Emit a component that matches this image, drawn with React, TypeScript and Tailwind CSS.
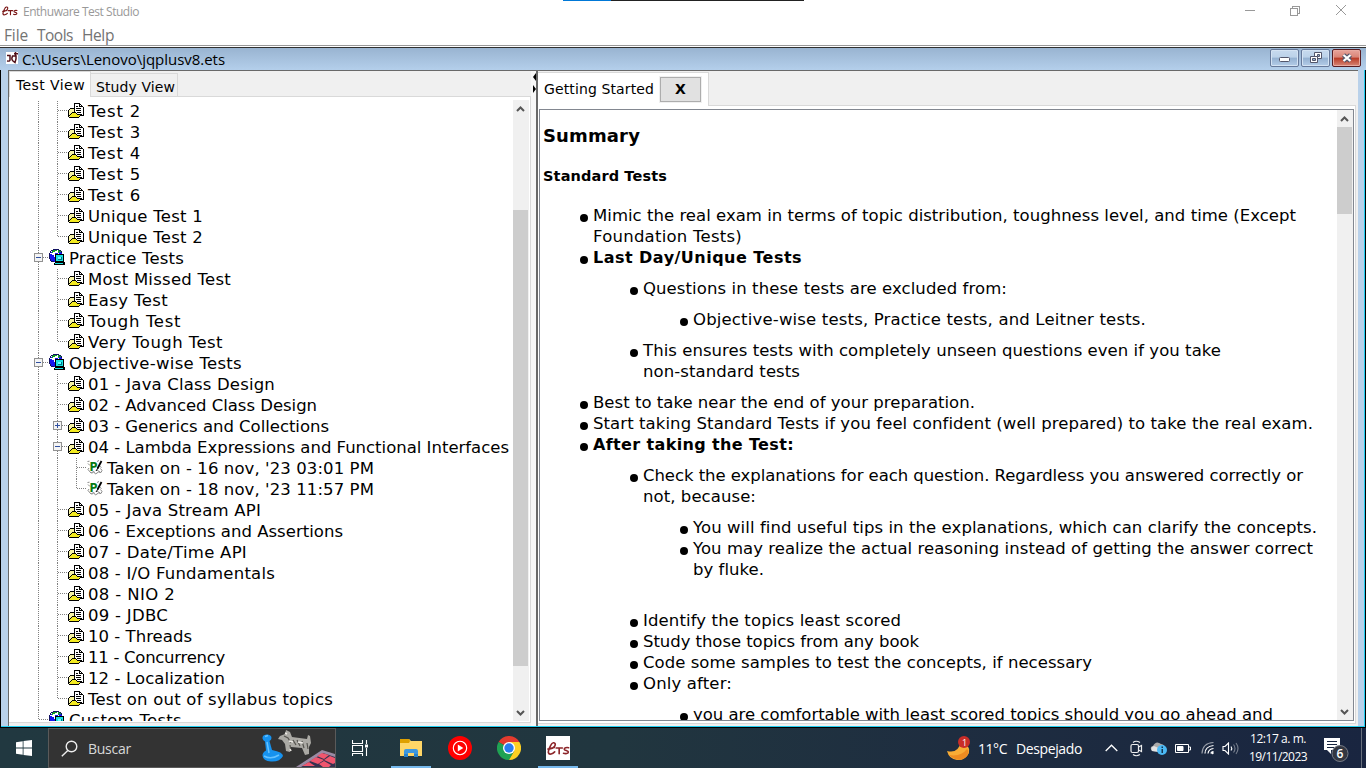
import React, { useLayoutEffect, useRef, useState } from 'react';

const VERDANA = "font-['DejaVu_Sans',sans-serif]";

/* A single line of text tracked so that it fills the given width. */
function Fit({ w, children, className = '' }: { w: number; children: string; className?: string }) {
  const ref = useRef<HTMLSpanElement>(null);
  const [tracking, setTracking] = useState(0);
  useLayoutEffect(() => {
    if (ref.current) {
      const natural = ref.current.getBoundingClientRect().width;
      setTracking((w - natural) / children.length);
    }
  }, []);
  return (
    <span ref={ref} className={'inline-block whitespace-pre ' + className} style={{ letterSpacing: tracking + 'px' }}>
      {children}
    </span>
  );
}

function EtsLogo({ width, height, color }: { width: number; height: number; color: string }) {
  return (
    <svg width={width} height={height} viewBox="0 0 24 16" fill="none" stroke={color} strokeWidth="1.7" strokeLinecap="round">
      <path d="M3 8.5C7 8 9 5 8.500 3 8 1.500 5.500 1.500 4 4.500 2.500 7 1 10 1.500 12.500 2.200 15 6 13.500 8 11.500M1 8.500 7.500 7" />
      <path d="M9.500 7.500h6.500M12.700 7.500v6M22.500 7.200c-2-.5-4.500 0-4.500 1.500s4.300 1.300 4.300 3-3 2-5 1.300" />
    </svg>
  );
}

function FolderIcon() {
  return (
    <svg className="shrink-0" width="16" height="15" viewBox="0 0 16 15" shapeRendering="crispEdges">
      <path d="M1 7h1V6h5v8H1z" fill="#f7f4a6" />
      <path d="M6 1h6v2h3v9H6z" fill="#fff" />
      <path d="M2 13v-1h1v-1h1v-1h5v1h4v1h-1v1h-1v1H2z" fill="#f3ea20" />
      <path d="M6 0h6v1H6zM6 1h1v8H6zM12 1h1v1h-1zM13 2h1v1h-1zM14 3h1v1h1v9h-3v-1h2V4h-4V1h1v2h2zM8 3h2v1H8zM8 5h5v1H8zM8 7h5v1H8zM9 9h4v1H9zM2 5h4v1H2zM1 6h1v1H1zM0 7h1v7H0zM1 12h1v1H1zM2 11h1v1H2zM3 10h1v1H3zM4 9h4v1H4zM8 10h1v1H8zM9 11h5v1H9zM12 12h1v1h-1zM11 13h1v1h-1zM1 14h10v1H1z" fill="#000" />
    </svg>
  );
}

function GlobeIcon() {
  return (
    <svg className="-mt-px shrink-0" width="16" height="16" viewBox="0 0 16 16" shapeRendering="crispEdges">
      <path d="M4 1h6v1h2v2h1v6H8v3H4v-1H2v-2H1V4h1V2h2z" fill="#fff" />
      <path d="M0 5h3v1h2v2h1v5H4v-1H2v-2H1V9H0zM2 3h2v1H2zM10 3h3v2h-3zM6 4h3v1H6z" fill="#1414f0" />
      <path d="M4 1h4v1H6v1H4v1H3V2h1zM9 1h2v1h1v1h-2v1H9z" fill="#14a024" />
      <path d="M4 0h6v1H4zM10 1h2v1h-2zM12 2h1v2h-1zM2 1h2v1H2zM1 2h1v2H1zM0 4h1v6H0zM1 10h1v2H1zM2 12h3v1H2z" fill="#101060" />
      <path d="M6 5h9v8h1v3H5v-2h1z" fill="#000" />
      <path d="M7 6h7v6H7z" fill="#18e0e0" />
      <path d="M9 8h4v3H9z" fill="#078" />
      <path d="M9 8h3v2H9z" fill="#6ff" />
      <path d="M6 14h8v1H6z" fill="#20dede" />
    </svg>
  );
}

function ResultIcon() {
  return (
    <svg className="shrink-0" width="16" height="15" viewBox="0 0 16 15" fill="none">
      <path d="M0.500 1.500 2.500 1.200M1 3.500l2 2M2 8l-1 1.500 3 3.500 2.500-1.500 2 2.500 3-2 2.500.5 1-2-1.500-2M12.500 6l2 1.500M10 1.500l2-1M5 13.500l2-2M10 10l3 2" stroke="#8a8a8a" />
      <text x="2.500" y="10.500" fontFamily="DejaVu Sans" fontWeight="bold" fontSize="12.500" textLength="8" lengthAdjust="spacingAndGlyphs" fill="#087a12">P</text>
      <path d="M14.500 1 10.500 8.500" stroke="#000" strokeWidth="1.800" />
      <path d="M9 11l2-3" stroke="#000" />
    </svg>
  );
}

function Expander({ open }: { open: boolean }) {
  return (
    <svg className="shrink-0" width="9" height="9" viewBox="0 0 9 9" shapeRendering="crispEdges">
      <rect x=".5" y=".5" width="8" height="8" fill="#f4f4f4" stroke="#919191" />
      <path d={open ? 'M2 4h5v1H2z' : 'M2 4h5v1H2zM4 2h1v5H4z'} fill="#3050a0" />
    </svg>
  );
}

type Node = { d: 0 | 1 | 2; t: string; w: number; x?: 'open' | 'closed'; last?: boolean };
const nodes: Node[] = [
  { d: 1, t: 'Test 2', w: 53 },
  { d: 1, t: 'Test 3', w: 53 },
  { d: 1, t: 'Test 4', w: 53 },
  { d: 1, t: 'Test 5', w: 53 },
  { d: 1, t: 'Test 6', w: 53 },
  { d: 1, t: 'Unique Test 1', w: 115 },
  { d: 1, t: 'Unique Test 2', w: 115, last: true },
  { d: 0, t: 'Practice Tests', w: 115, x: 'open' },
  { d: 1, t: 'Most Missed Test', w: 143 },
  { d: 1, t: 'Easy Test', w: 80 },
  { d: 1, t: 'Tough Test', w: 93 },
  { d: 1, t: 'Very Tough Test', w: 135, last: true },
  { d: 0, t: 'Objective-wise Tests', w: 173, x: 'open' },
  { d: 1, t: '01 - Java Class Design', w: 187 },
  { d: 1, t: '02 - Advanced Class Design', w: 229 },
  { d: 1, t: '03 - Generics and Collections', w: 241, x: 'closed' },
  { d: 1, t: '04 - Lambda Expressions and Functional Interfaces', w: 421, x: 'open' },
  { d: 2, t: "Taken on - 16 nov, '23 03:01 PM", w: 267 },
  { d: 2, t: "Taken on - 18 nov, '23 11:57 PM", w: 267, last: true },
  { d: 1, t: '05 - Java Stream API', w: 173 },
  { d: 1, t: '06 - Exceptions and Assertions', w: 255 },
  { d: 1, t: '07 - Date/Time API', w: 159 },
  { d: 1, t: '08 - I/O Fundamentals', w: 187 },
  { d: 1, t: '08 - NIO 2', w: 87 },
  { d: 1, t: '09 - JDBC', w: 80 },
  { d: 1, t: '10 - Threads', w: 104 },
  { d: 1, t: '11 - Concurrency', w: 137 },
  { d: 1, t: '12 - Localization', w: 137 },
  { d: 1, t: 'Test on out of syllabus topics', w: 245, last: true },
  { d: 0, t: 'Custom Tests', w: 113, last: true },
];

/* One 19px wide indentation cell holding the dotted guide lines. */
function Cell({ v, h, last, x }: { v: boolean; h: boolean; last?: boolean; x?: 'open' | 'closed' }) {
  return (
    <span className="relative h-[21px] w-[19px] shrink-0">
      <svg className="block" width="19" height="21" shapeRendering="crispEdges" stroke="#808080" strokeDasharray="1 1">
        {v && <path d={last ? 'M8.500 0V10' : 'M8.500 0V21'} />}
        {h && <path d="M9 9.500H19" />}
      </svg>
      {x && (
        <span className="absolute left-1 top-[5px] flex">
          <Expander open={x === 'open'} />
        </span>
      )}
    </span>
  );
}

function TreeRow({ n }: { n: Node }) {
  return (
    <div className="flex h-[21px] shrink-0 items-center">
      <Cell v h={n.d === 0} last={n.d === 0 && n.last} x={n.d === 0 ? n.x : undefined} />
      {n.d >= 1 && <Cell v h={n.d === 1} last={n.d === 1 && n.last} x={n.d === 1 ? n.x : undefined} />}
      {n.d === 2 && <Cell v h last={n.last} />}
      <span className="-mt-[2px] flex">{n.d === 0 ? <GlobeIcon /> : n.d === 1 ? <FolderIcon /> : <ResultIcon />}</span>
      <span className="ml-1 flex h-[21px] items-center leading-[21px]">
        <Fit w={n.w}>{n.t}</Fit>
      </span>
    </div>
  );
}

function ScrollArrow({ down }: { down?: boolean }) {
  return (
    <svg className="shrink-0" width="16" height="17" viewBox="0 0 16 17" fill="none" stroke="#555" strokeWidth="2">
      <path d={down ? 'M4 7l3.500 3.500L11 7' : 'M4 11l3.500-3.500L11 11'} />
    </svg>
  );
}

function Item({ children, bold, indent = 0 }: { children: React.ReactNode; bold?: boolean; indent?: 0 | 1 | 2 }) {
  const pad = indent === 0 ? 'pl-[40px]' : indent === 1 ? 'pl-[90px]' : 'pl-[140px]';
  return (
    <div className={'flex items-start ' + pad + (bold ? ' text-[16px] font-bold' : '')}>
      <span className="mr-[5px] mt-[8.500px] h-2 w-2 shrink-0 rounded-full bg-black" />
      <div className="flex flex-col items-start">{children}</div>
    </div>
  );
}

function Content() {
  return (
    <div className="flex min-w-0 flex-1 flex-col overflow-hidden text-[16.5px] leading-[21px] text-black">
      <div className="mt-[13px] pl-[3px] text-[18px] font-bold leading-[25px]"><Fit w={97}>Summary</Fit></div>
      <div className="mb-[18px] mt-[18px] pl-[3px] text-[14.500px] font-bold"><Fit w={124}>Standard Tests</Fit></div>
      <Item>
        <Fit w={703}>Mimic the real exam in terms of topic distribution, toughness level, and time (Except</Fit>
        <Fit w={149}>Foundation Tests)</Fit>
      </Item>
      <Item bold><Fit w={209}>Last Day/Unique Tests</Fit></Item>
      <div className="h-[10px] shrink-0" />
      <Item indent={1}><Fit w={364}>Questions in these tests are excluded from:</Fit></Item>
      <div className="h-[10px] shrink-0" />
      <Item indent={2}><Fit w={453}>Objective-wise tests, Practice tests, and Leitner tests.</Fit></Item>
      <div className="h-[10px] shrink-0" />
      <Item indent={1}>
        <Fit w={578}>This ensures tests with completely unseen questions even if you take</Fit>
        <Fit w={157}>non-standard tests</Fit>
      </Item>
      <div className="h-[10px] shrink-0" />
      <Item><Fit w={382}>Best to take near the end of your preparation.</Fit></Item>
      <Item><Fit w={720}>Start taking Standard Tests if you feel confident (well prepared) to take the real exam.</Fit></Item>
      <Item bold><Fit w={201}>After taking the Test:</Fit></Item>
      <div className="h-[10px] shrink-0" />
      <Item indent={1}>
        <Fit w={660}>Check the explanations for each question. Regardless you answered correctly or</Fit>
        <Fit w={113}>not, because:</Fit>
      </Item>
      <div className="h-[10px] shrink-0" />
      <Item indent={2}><Fit w={624}>You will find useful tips in the explanations, which can clarify the concepts.</Fit></Item>
      <Item indent={2}>
        <Fit w={620}>You may realize the actual reasoning instead of getting the answer correct</Fit>
        <Fit w={71}>by fluke.</Fit>
      </Item>
      <div className="h-[30px] shrink-0" />
      <Item indent={1}><Fit w={258}>Identify the topics least scored</Fit></Item>
      <Item indent={1}><Fit w={276}>Study those topics from any book</Fit></Item>
      <Item indent={1}><Fit w={449}>Code some samples to test the concepts, if necessary</Fit></Item>
      <Item indent={1}><Fit w={89}>Only after:</Fit></Item>
      <div className="h-[10px] shrink-0" />
      <Item indent={2}><Fit w={580}>you are comfortable with least scored topics should you go ahead and</Fit></Item>
    </div>
  );
}

function TitleBars() {
  return (
    <>
      <div className="flex h-6 shrink-0 items-start bg-white font-['Open_Sans',sans-serif] text-[12px] leading-6 text-[#999]">
        <span className="ml-[2px] mt-[5px] flex"><EtsLogo width={16} height={12} color="#7a1616" /></span>
        <Fit w={116} className="ml-[5px]">Enthuware Test Studio</Fit>
        <div className="ml-[424px] flex h-px w-[241px]"><i className="w-12 bg-[#0078d7]" /><i className="flex-1 bg-[#222]" /></div>
        <svg className="ml-auto mr-[18px] mt-1" width="104" height="14" fill="none" stroke="#999" shapeRendering="crispEdges">
          <path d="M1 6.500h10M46.500 4.500h7v7h-7zM48.500 4V2.500h7v7H54" />
          <path d="M92 1l10 10M102 1 92 11" shapeRendering="auto" />
        </svg>
      </div>
      <div className="flex h-[21px] shrink-0 items-center gap-[9px] bg-white pl-1 pt-[2px] font-['Open_Sans',sans-serif] text-[15.500px] leading-[19px] text-[#737373]">
        <Fit w={24}>File</Fit><Fit w={36}>Tools</Fit><Fit w={32}>Help</Fit>
      </div>
      <div className="h-[3px] shrink-0 border-b border-t border-b-[#303030] border-t-[#999] bg-white" />
    </>
  );
}

function FrameTitle() {
  return (
    <div className="flex h-[22px] shrink-0 items-center bg-gradient-to-b from-[#99b4d1] to-[#b4cfeb] pr-[5px]">
      <svg className="-mt-[2px] ml-[6px]" width="12" height="12" viewBox="0 0 12 12">
        <rect width="12" height="12" fill="#fff" />
        <path d="M1 3.500h3V8Q4 9.500 1 9M6.500 4Q5 7 7 9L9 10.500 10 7V4zM9.500 0v4M8 1.700h4" stroke="#501018" strokeWidth="1.500" fill="none" />
      </svg>
      <span className="ml-1 font-['Open_Sans',sans-serif] text-[15px] leading-[22px] text-black"><Fit w={203}>{'C:\\Users\\Lenovo\\jqplusv8.ets'}</Fit></span>
      <div className="-mt-[2px] ml-auto flex gap-[2px]">
        <div className="flex h-[18px] w-[29px] items-center justify-center rounded-[2px] border border-[#66799a] bg-[linear-gradient(#c7daee_0%,#bcd2e9_45%,#94b1d1_50%,#b4cde8_100%)] shadow-[inset_0_0_0_1px_#d4e3f3]">
          <svg className="mt-[3px]" width="11" height="5"><rect x=".5" y=".5" width="10" height="4" rx="1" fill="#fff" stroke="#53566b" /></svg>
        </div>
        <div className="flex h-[18px] w-[29px] items-center justify-center rounded-[2px] border border-[#66799a] bg-[linear-gradient(#c7daee_0%,#bcd2e9_45%,#94b1d1_50%,#b4cde8_100%)] shadow-[inset_0_0_0_1px_#d4e3f3]">
          <svg width="12" height="12" fill="#fff" stroke="#53566b"><path d="M4.500.5h7v6h-7z" /><path d="M7.500 2.500h2v2h-2z" fill="#94b1d1" /><path d="M.5 4.500h7v6h-7z" /><path d="M2.500 6.500h3v2h-3z" fill="#94b1d1" /></svg>
        </div>
        <div className="flex h-[18px] w-[29px] items-center justify-center rounded-[2px] border border-[#571c22] bg-[linear-gradient(#e8a59c_0%,#d98476_45%,#b93a25_50%,#d68676_100%)] shadow-[inset_0_0_0_1px_#e8aaa0]">
          <svg width="12" height="10" fill="none"><path d="M2.500 2l7 6M9.500 2l-7 6" stroke="#53566b" strokeWidth="4.500" /><path d="M2.500 2l7 6M9.500 2l-7 6" stroke="#fff" strokeWidth="2.300" /></svg>
        </div>
      </div>
    </div>
  );
}

function LeftPane() {
  return (
    <div className="flex w-[522px] shrink-0 flex-col bg-[#f0f0f0] pb-[3px]">
      <div className="flex h-[26px] shrink-0 items-end text-[14px] text-black">
        <div className="h-[26px] w-[82px] border-l border-r border-t border-[#d9d9d9] bg-white pl-[6px] pt-[2px] leading-[22px]"><Fit w={69}>Test View</Fit></div>
        <div className="flex h-6 w-[87px] items-start border-b border-r border-t border-[#d9d9d9] pl-[5px] pt-[2px] leading-[22px]"><Fit w={79}>Study View</Fit></div>
        <div className="h-px flex-1 bg-[#d9d9d9]" />
      </div>
      <div className="flex min-h-0 flex-1 border-b border-r border-[#d9d9d9] bg-white pb-[1px] pr-[1px] pt-[3px]">
        <div className="flex min-w-0 flex-1 flex-col overflow-hidden pl-[21px] pt-px text-[16.500px] text-black">
          {nodes.map((n, i) => <TreeRow key={i} n={n} />)}
        </div>
        <div className="flex w-4 shrink-0 flex-col bg-[#f0f0f0]">
          <ScrollArrow />
          <div className="mt-[93px] h-[456px] w-[15px] bg-[#cdcdcd]" />
          <div className="mt-auto flex"><ScrollArrow down /></div>
        </div>
      </div>
    </div>
  );
}

function RightPane() {
  return (
    <div className="flex min-w-0 flex-1 flex-col border-l-2 border-[#696969] bg-[#f0f0f0] pb-[2px] pr-[2px]">
      <div className="flex h-[35px] shrink-0 items-end">
        <div className="mt-px flex h-[34px] w-[171px] items-center border-r border-t border-[#d9d9d9] bg-white pb-px pl-[6px] text-[14px] text-black">
          <Fit w={110}>Getting Started</Fit>
          <div className="ml-[5px] flex h-[27px] w-[43px] items-center justify-center border border-[#f0f0f0] bg-[#adadad] p-px">
            <div className="flex h-full w-full items-center justify-center bg-[#e1e1e1] text-[14px] font-bold">X</div>
          </div>
        </div>
        <div className="h-px flex-1 bg-[#d9d9d9]" />
      </div>
      <div className="flex min-h-0 flex-1 border-b border-r border-[#d9d9d9] bg-white pb-[2px] pl-[1px] pr-[1px] pt-[3px]">
        <div className="flex min-w-0 flex-1 border border-[#828790] bg-white">
          <Content />
          <div className="flex w-4 shrink-0 flex-col bg-[#f0f0f0]">
            <ScrollArrow />
            <div className="h-[87px] w-[15px] bg-[#cdcdcd]" />
            <div className="mt-auto flex"><ScrollArrow down /></div>
          </div>
        </div>
      </div>
    </div>
  );
}

function SearchArt() {
  return (
    <svg width="78" height="38" viewBox="258 729 78 38">
      <path d="M297 767l26-17 13 4v13z" fill="#9a8aa4" />
      <path d="M302 767l22-14 12 4v10z" fill="#35314f" />
      <path d="M311 761l6-4 8 3-6 4zM323 753l7 2-5 4-7-3zM325 760l6-4 5 2v5l-2 1zM303 766l7-4 6 4zM320 764l5-3 7 4-2 2h-6z" fill="#f0566e" />
      <path d="M263.500 738.500q-.5-3.500 4-4 5 0 5 3.500 0 2-2 3l2.500 9q11 2 11 6-3 6-12 5.500-8-.5-8.500-6 0-3 3.500-5l-1-9q-2-1-2.500-3z" fill="#1692ef" />
      <path d="M266 736.500l3-1M268 742l2 11M265 756q7 4 15-1" stroke="#65c2ff" strokeWidth="1.500" fill="none" />
      <path d="M281 736l5-2 1-4 4 2 2 5 15 2 1-4 2 1 1 7-2 4 0 7-4 1-3-7-11-1-1 5-4-1-1-7-3-4-4-1z" fill="#aaa9a4" />
      <path d="M285 736l4 2 3 5M294 740l3 5M298 740l3 6M303 741l2 7M291 745l1 6M308 743l1 6" stroke="#55544f" strokeWidth="1.200" fill="none" />
      <path d="M286 733l2 1M290 741l4 1M299 742l5 1M291 749l1 2" stroke="#eceae5" strokeWidth="1.500" />
    </svg>
  );
}

function Taskbar() {
  return (
    <div className="flex h-10 shrink-0 items-stretch bg-[linear-gradient(90deg,#213840_0%,#21363f_45%,#1e2d40_70%,#192540_100%)] font-['Open_Sans',sans-serif] text-white">
      <div className="flex w-12 items-center justify-center">
        <svg width="16" height="16" viewBox="0 0 16 16" fill="#fff"><path d="M0 2.200 6.700 1.200v6.400H0zM7.500 1.100 16 0v7.600H7.500zM0 8.400h6.700v6.400L0 13.800zM7.500 8.400H16V16L7.500 14.900z" /></svg>
      </div>
      <div className="flex w-72 items-center border border-[#5a5a5a] bg-[#333] pl-3 text-[14px] text-[#d8d8d8]">
        <svg width="17" height="17" fill="none" stroke="#eee" strokeWidth="1.400"><circle cx="10.500" cy="6.500" r="5.300" /><path d="M6.800 10.400.8 16.300" /></svg>
        <Fit w={43} className="ml-[10px]">Buscar</Fit>
        <div className="ml-auto flex"><SearchArt /></div>
      </div>
      <div className="flex w-[55px] items-center pl-[16px]">
        <svg width="17" height="16" fill="none" stroke="#fff" strokeWidth="1.100"><path d="M.5 0v3.500h10V0M.5 5.500h10v6H.5zM.5 16v-2.500h10V16M14.500 0v4M14.500 8v8" /><path d="M13 4.500h3v3h-3z" fill="#fff" stroke="none" /></svg>
      </div>
      <div className="flex w-10 flex-col items-center justify-between pt-[10px]">
        <svg width="22" height="21" viewBox="0 0 22 21"><path d="M0 1h9l2 2h11v15H0z" fill="#ffd667" /><path d="M0 1h9l1 2-1 2H0z" fill="#dfa000" /><path d="M4 19v-6q0-2 2-2h10q2 0 2 2v6h-4v-4H8v4z" fill="#3e98df" /><path d="M4 16h4v3H4zM14 16h4v3h-4z" fill="#2882ca" /></svg>
        <div className="h-[2px] w-10 bg-[#76b9ed]" />
      </div>
      <div className="flex w-[58px] items-center justify-center">
        <svg width="24" height="24" fill="none"><circle cx="12" cy="12" r="12" fill="#f00" /><circle cx="12" cy="12" r="6.700" stroke="#fff" strokeWidth="1.100" /><path d="M9.800 8.500v7l5.500-3.500z" fill="#fff" /></svg>
      </div>
      <div className="flex w-10 items-center justify-center">
        <svg width="24" height="24" viewBox="0 0 24 24"><path d="M12 12 1.600 6A12 12 0 0 1 22.400 6z" fill="#e33b2e" /><path d="M12 12 1.600 6A12 12 0 0 0 12 24l5.200-9z" fill="#1fa253" /><path d="M12 6h10.400A12 12 0 0 1 12 24l5.200-9z" fill="#fdd022" /><circle cx="12" cy="12" r="6" fill="#fff" /><circle cx="12" cy="12" r="4.700" fill="#297df0" /></svg>
      </div>
      <div className="ml-[9px] flex w-10 flex-col items-center justify-between pt-2">
        <div className="flex h-6 w-6 items-center justify-center bg-white"><EtsLogo width={23} height={17} color="#8c2529" /></div>
        <div className="h-[2px] w-10 bg-[#76b9ed]" />
      </div>
      <div className="ml-auto flex items-center">
        <svg width="24" height="25" viewBox="0 0 24 25"><path d="M0 15q11 3 14-9 10 3 8 11-4 8-12 7-8-1-10-9z" fill="#f8ac35" /><path d="M2 19q12 2 18-6 3 3 0 7-8 8-18-1z" fill="#ed8c21" /><circle cx="17" cy="6" r="6" fill="#c92d28" /><text x="15" y="9.500" fontSize="9" fill="#fff">1</text></svg>
        <span className="ml-[7px] flex gap-[9px] text-[14px]"><Fit w={29}>11°C</Fit><Fit w={66}>Despejado</Fit></span>
        <svg className="ml-[23px]" width="13" height="8" fill="none" stroke="#fff" strokeWidth="1.300"><path d="M.7 7 6.500 1.200 12.300 7" /></svg>
        <svg className="ml-[12px]" width="13" height="17" fill="none" stroke="#eee" strokeWidth="1.200"><rect x="1" y="4.500" width="7.500" height="8" rx="1.500" /><path d="M8.500 7l3-1.500v6l-3-1.500M3 2.500q3-2.500 7 0M3 14.500q3 2.500 7 0" /></svg>
        <svg className="ml-[7px]" width="18" height="15"><path d="M2 10Q-1 6 3 5 6-1 11 3q5 1 4 6L10 11z" fill="#aaa" /><path d="M2 10Q0 6 4 5l9 4-4 2z" fill="#e2e2e2" /><circle cx="12" cy="9" r="5" fill="#4bb9f5" /><path d="M11.500 5.500h1.500V7h-1.500zM11.500 8h1.500v4h-1.500z" fill="#143550" /></svg>
        <svg className="ml-[7px]" width="17" height="11" fill="none" stroke="#fff"><path d="M.5 1.500h13v8H.5zM14 4h1.500v3H14" /><path d="M2.500 3.500H8v4H2.500z" fill="#fff" /></svg>
        <svg className="ml-[9px]" width="14" height="14" fill="none" stroke="#fff" strokeWidth="1.200"><path d="M1 12.500Q1.500 2 12.500 1.500" opacity=".55" /><path d="M4 12.500Q4 5.500 12.500 4.500M7 12.500Q7.500 8 12.500 7.500" /><path d="M10 12.500q0-2 2.500-2" /><circle cx="11.500" cy="12" r="1.200" fill="#fff" stroke="none" /></svg>
        <svg className="ml-[7px]" width="17" height="13" fill="none" stroke="#fff" strokeWidth="1.100"><path d="M1 4.500h2L6.500 1v11L3 8.500H1z" /><path d="M9 4.500q1.500 2 0 4" /><path d="M11.500 2.500q3 4 0 8M14 1q4 5.500 0 11" opacity=".4" /></svg>
        <div className="ml-[9px] flex w-[60px] flex-col items-center text-[12px] leading-[18px]"><Fit w={56}>12:17 a. m.</Fit><Fit w={58}>19/11/2023</Fit></div>
        <svg className="ml-[16px] mr-[12px] mt-1" width="25" height="25"><path d="M0 0h16v12H7v4l-4-4H0z" fill="#fff" /><path d="M3 3.500h10M3 6.500h10M3 9.500h7" stroke="#182640" /><circle cx="16" cy="15.500" r="8" fill="#343741" stroke="#767b86" /><text x="12.500" y="20" fontSize="12" fontWeight="600" fill="#fff">6</text></svg>
        <div className="h-10 w-px bg-[#68707d]" />
        <div className="w-1" />
      </div>
    </div>
  );
}

export default function App() {
  return (
    <div className={'flex h-[768px] w-[1366px] flex-col overflow-hidden bg-white ' + VERDANA}>
      <TitleBars />
      <div className="flex h-[680px] shrink-0 flex-col">
        <FrameTitle />
        <div className="flex min-h-0 flex-1 border-b border-l border-r border-black">
          <div className="flex min-w-0 flex-1 border-b border-r border-[#21cdf0] bg-[#b9d1ea] pl-[7px] pr-[6px]">
            <div className="flex min-w-0 flex-1 border-l border-t border-[#696969] bg-[#f0f0f0]">
              <LeftPane />
              <div className="w-[5px] shrink-0 bg-[#f7f7f7]">
                <svg className="ml-[1px] mt-[2px]" width="4" height="20"><path d="M4 0v8L1 4zM1 12v8l3-4z" fill="#000" /></svg>
              </div>
              <RightPane />
            </div>
          </div>
        </div>
      </div>
      <Taskbar />
    </div>
  );
}
